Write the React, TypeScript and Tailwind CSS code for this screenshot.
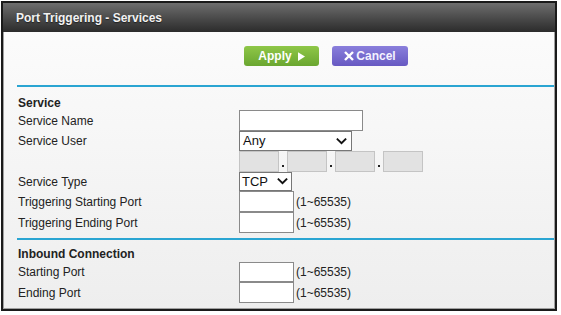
import React from "react"

const font = { fontFamily: '"Liberation Sans", Arial, sans-serif' }

function Chevron({ className }: { className?: string }) {
  return (
    <svg viewBox="0 0 12 8" className={className} fill="none" stroke="#111" strokeWidth="2.2" strokeLinecap="square">
      <path d="M1.5 1.5 L6 6 L10.5 1.5" />
    </svg>
  )
}

function Row({ label, h, children }: { label: string; h: string; children?: React.ReactNode }) {
  return (
    <div className={`flex ${h}`}>
      <div className="w-[235px] pl-[14px] flex items-center text-[12px] text-[#222]">{label}</div>
      <div className="flex items-stretch">{children}</div>
    </div>
  )
}

function PortInput() {
  return (
    <>
      <div className="w-[55px] bg-white border border-[#8a8a8a]" />
      <div className="flex items-center pl-[2px] text-[12px] text-[#222]">(1~65535)</div>
    </>
  )
}

export default function App() {
  return (
    <div className="w-[561px] h-[315px] bg-white pl-px pt-px" style={font}>
      <div className="w-[556px] h-[310px] border-2 border-[#1a1a1a] flex flex-col bg-gradient-to-b from-[#fdfdfd] to-[#eeeeee] overflow-hidden">
        {/* Title bar */}
        <div className="h-[29px] shrink-0 flex items-center pl-[13px] bg-gradient-to-b from-[#6e6e6e] to-[#2c2c2c]">
          <span className="text-[12px] font-bold text-[#f2f2f2] [text-shadow:0_1px_1px_rgba(0,0,0,0.5)]">
            Port Triggering - Services
          </span>
        </div>

        <div className="flex-1 border-x border-b border-[#a0a0a0] flex flex-col">
          {/* Buttons */}
          <div className="flex gap-[13px] pl-[240px] pt-[14px]">
            <div className="w-[75px] h-[20px] rounded-[3px] bg-gradient-to-b from-[#8fc748] to-[#6aa630] flex items-center justify-center gap-[6px] text-white text-[12px] font-bold">
              <span>Apply</span>
              <svg viewBox="0 0 8 10" className="w-[7px] h-[9px]" fill="#fff">
                <path d="M0 0 L8 5 L0 10 Z" />
              </svg>
            </div>
            <div className="w-[76px] h-[20px] rounded-[3px] bg-gradient-to-b from-[#8a7fdc] to-[#6759c2] flex items-center justify-center gap-[2px] text-[#f4f2ff] text-[12px] font-bold">
              <svg viewBox="0 0 10 10" className="w-[10px] h-[10px]" fill="none" stroke="#fff" strokeWidth="2.4">
                <path d="M1 1 L9 9 M9 1 L1 9" />
              </svg>
              <span>Cancel</span>
            </div>
          </div>

          <div className="mt-[19px] ml-[13px] h-[2px] bg-[#2aa5d2]" />

          {/* Service */}
          <div className="mt-[9px] h-[14px] leading-[14px] pl-[14px] text-[12px] font-bold text-[#222]">Service</div>
          <Row label="Service Name" h="h-[21px]">
            <div className="w-[124px] bg-white border border-[#8a8a8a]" />
          </Row>
          <Row label="Service User" h="h-[20px]">
            <div className="w-[113px] bg-white border border-[#777] flex items-center justify-between pl-[3px] pr-[4px] text-[13px] text-[#111]">
              <span>Any</span>
              <Chevron className="w-[11px] h-[7px]" />
            </div>
          </Row>
          <Row label="" h="h-[21px]">
            <div className="flex">
              {[0, 1, 2, 3].map((i) => (
                <div key={i} className="flex">
                  {i > 0 && (
                    <div className="w-[8px] flex items-end justify-center pb-[5px]">
                      <div className="w-[2px] h-[2px] bg-[#222]" />
                    </div>
                  )}
                  <div className="w-[40px] bg-[#e2e2e2] border border-[#c4c4c4]" />
                </div>
              ))}
            </div>
          </Row>
          <Row label="Service Type" h="h-[19px]">
            <div className="w-[53px] bg-white border border-[#777] flex items-center justify-between pl-[2px] pr-[3px] text-[13px] text-[#111]">
              <span>TCP</span>
              <Chevron className="w-[11px] h-[7px]" />
            </div>
          </Row>
          <Row label="Triggering Starting Port" h="h-[21px]">
            <PortInput />
          </Row>
          <Row label="Triggering Ending Port" h="h-[21px]">
            <PortInput />
          </Row>

          <div className="mt-[5px] ml-[13px] h-[2px] bg-[#2aa5d2]" />

          {/* Inbound Connection */}
          <div className="mt-[7px] h-[14px] leading-[14px] pl-[14px] text-[12px] font-bold text-[#222]">Inbound Connection</div>
          <div className="mt-px" />
          <Row label="Starting Port" h="h-[20px]">
            <PortInput />
          </Row>
          <Row label="Ending Port" h="h-[21px]">
            <PortInput />
          </Row>
        </div>
      </div>
    </div>
  )
}
